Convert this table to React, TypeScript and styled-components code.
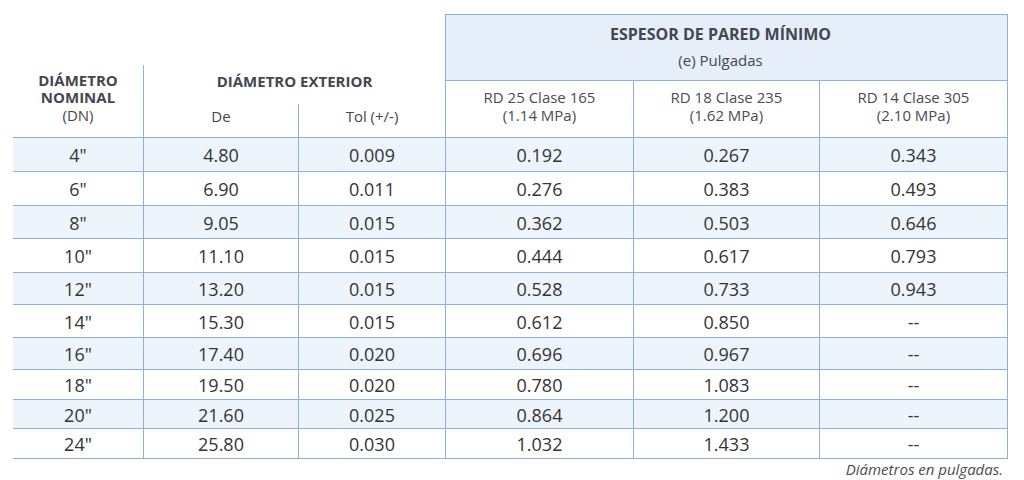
import styled, { createGlobalStyle } from "styled-components";

const GlobalStyle = createGlobalStyle`
  body {
    margin: 0;
    background: #ffffff;
    font-family: "Open Sans", "Noto Sans", sans-serif;
    color: #3a3a3a;
  }
`;

const line = "#8db0dc";

const Page = styled.div`
  padding: 14px 0 0 13px;
  width: 995px;
`;

const Table = styled.div`
  display: grid;
  grid-template-columns: 130px 155px 147px 188px 186px 189px;
  grid-template-rows: 67px 57px;
  grid-auto-rows: auto;
`;

const NominalHead = styled.div`
  grid-column: 1;
  grid-row: 1 / span 2;
  align-self: end;
  height: 73px;
  box-sizing: border-box;
  border-bottom: 1px solid ${line};
  padding-top: 7px;
  text-align: center;
  font-size: 15px;
  line-height: 17px;
  color: #45464f;
`;

const Strong = styled.div`
  font-weight: 700;
`;

const Plain = styled.div`
  line-height: 19px;
`;

const ExteriorHead = styled.div`
  grid-column: 2 / span 2;
  grid-row: 1 / span 2;
  align-self: end;
  height: 73px;
  box-sizing: border-box;
  border-left: 1px solid ${line};
  border-bottom: 1px solid ${line};
  display: flex;
  flex-direction: column;
  color: #45464f;
`;

const HeadTitle = styled.div`
  height: 39px;
  padding-top: 6px;
  box-sizing: border-box;
  text-align: center;
  font-weight: 700;
  font-size: 15px;
  line-height: 20px;
`;

const SubHeads = styled.div`
  flex: 1;
  display: grid;
  grid-template-columns: 154px 147px;
`;

const SubHead = styled.div<{ $divider?: boolean }>`
  border-left: ${(p) => (p.$divider ? `1px solid ${line}` : "none")};
  padding-top: 2px;
  text-align: center;
  font-size: 15px;
  line-height: 20px;
`;

const EspesorHead = styled.div`
  grid-column: 4 / span 3;
  grid-row: 1;
  box-sizing: border-box;
  border: 1px solid ${line};
  background: #e6eff9;
  padding: 8px 12px 0 0;
  text-align: center;
  color: #45464f;
`;

const EspesorTitle = styled.div`
  font-weight: 700;
  font-size: 16px;
  line-height: 22px;
`;

const EspesorSub = styled.div`
  margin-top: 4px;
  font-size: 15px;
  line-height: 22px;
`;

const ClassHead = styled.div<{ $last?: boolean }>`
  grid-row: 2;
  box-sizing: border-box;
  border-left: 1px solid ${line};
  border-right: ${(p) => (p.$last ? `1px solid ${line}` : "none")};
  border-bottom: 1px solid ${line};
  padding-top: 7px;
  text-align: center;
  font-size: 15px;
  line-height: 18px;
  color: #4a4b52;
`;

const Cell = styled.div<{ $col: number; $band: boolean; $h: number }>`
  height: ${(p) => p.$h}px;
  box-sizing: border-box;
  display: flex;
  align-items: center;
  justify-content: center;
  background: ${(p) => (p.$band ? "#eef4fb" : "#ffffff")};
  border-bottom: 1px solid ${line};
  border-left: ${(p) => (p.$col > 0 ? `1px solid ${line}` : "none")};
  border-right: ${(p) => (p.$col === 5 ? `1px solid ${line}` : "none")};
  font-size: 18px;
  color: #343434;
  padding-top: 1px;
`;

const Note = styled.div`
  text-align: right;
  padding-right: 5px;
  font-style: italic;
  font-size: 15px;
  line-height: 21px;
  color: #4a4b52;
`;

const rows: string[][] = [
  ['4"', "4.80", "0.009", "0.192", "0.267", "0.343"],
  ['6"', "6.90", "0.011", "0.276", "0.383", "0.493"],
  ['8"', "9.05", "0.015", "0.362", "0.503", "0.646"],
  ['10"', "11.10", "0.015", "0.444", "0.617", "0.793"],
  ['12"', "13.20", "0.015", "0.528", "0.733", "0.943"],
  ['14"', "15.30", "0.015", "0.612", "0.850", "--"],
  ['16"', "17.40", "0.020", "0.696", "0.967", "--"],
  ['18"', "19.50", "0.020", "0.780", "1.083", "--"],
  ['20"', "21.60", "0.025", "0.864", "1.200", "--"],
  ['24"', "25.80", "0.030", "1.032", "1.433", "--"],
];

const heights = [34, 34, 33, 34, 32, 33, 32, 30, 29, 30];

const classes = [
  ["RD 25 Clase 165", "(1.14 MPa)"],
  ["RD 18 Clase 235", "(1.62 MPa)"],
  ["RD 14 Clase 305", "(2.10 MPa)"],
];

export default function App() {
  return (
    <Page>
      <GlobalStyle />
      <Table>
        <NominalHead>
          <Strong>DIÁMETRO</Strong>
          <Strong>NOMINAL</Strong>
          <Plain>(DN)</Plain>
        </NominalHead>
        <ExteriorHead>
          <HeadTitle>DIÁMETRO EXTERIOR</HeadTitle>
          <SubHeads>
            <SubHead>De</SubHead>
            <SubHead $divider>Tol (+/-)</SubHead>
          </SubHeads>
        </ExteriorHead>
        <EspesorHead>
          <EspesorTitle>ESPESOR DE PARED MÍNIMO</EspesorTitle>
          <EspesorSub>(e) Pulgadas</EspesorSub>
        </EspesorHead>
        {classes.map(([a, b], i) => (
          <ClassHead key={a} $last={i === 2}>
            <div>{a}</div>
            <div>{b}</div>
          </ClassHead>
        ))}
        {rows.map((r, ri) =>
          r.map((v, ci) => (
            <Cell key={`${ri}-${ci}`} $col={ci} $band={ri % 2 === 0} $h={heights[ri]}>
              {v}
            </Cell>
          ))
        )}
      </Table>
      <Note>Diámetros en pulgadas.</Note>
    </Page>
  );
}
